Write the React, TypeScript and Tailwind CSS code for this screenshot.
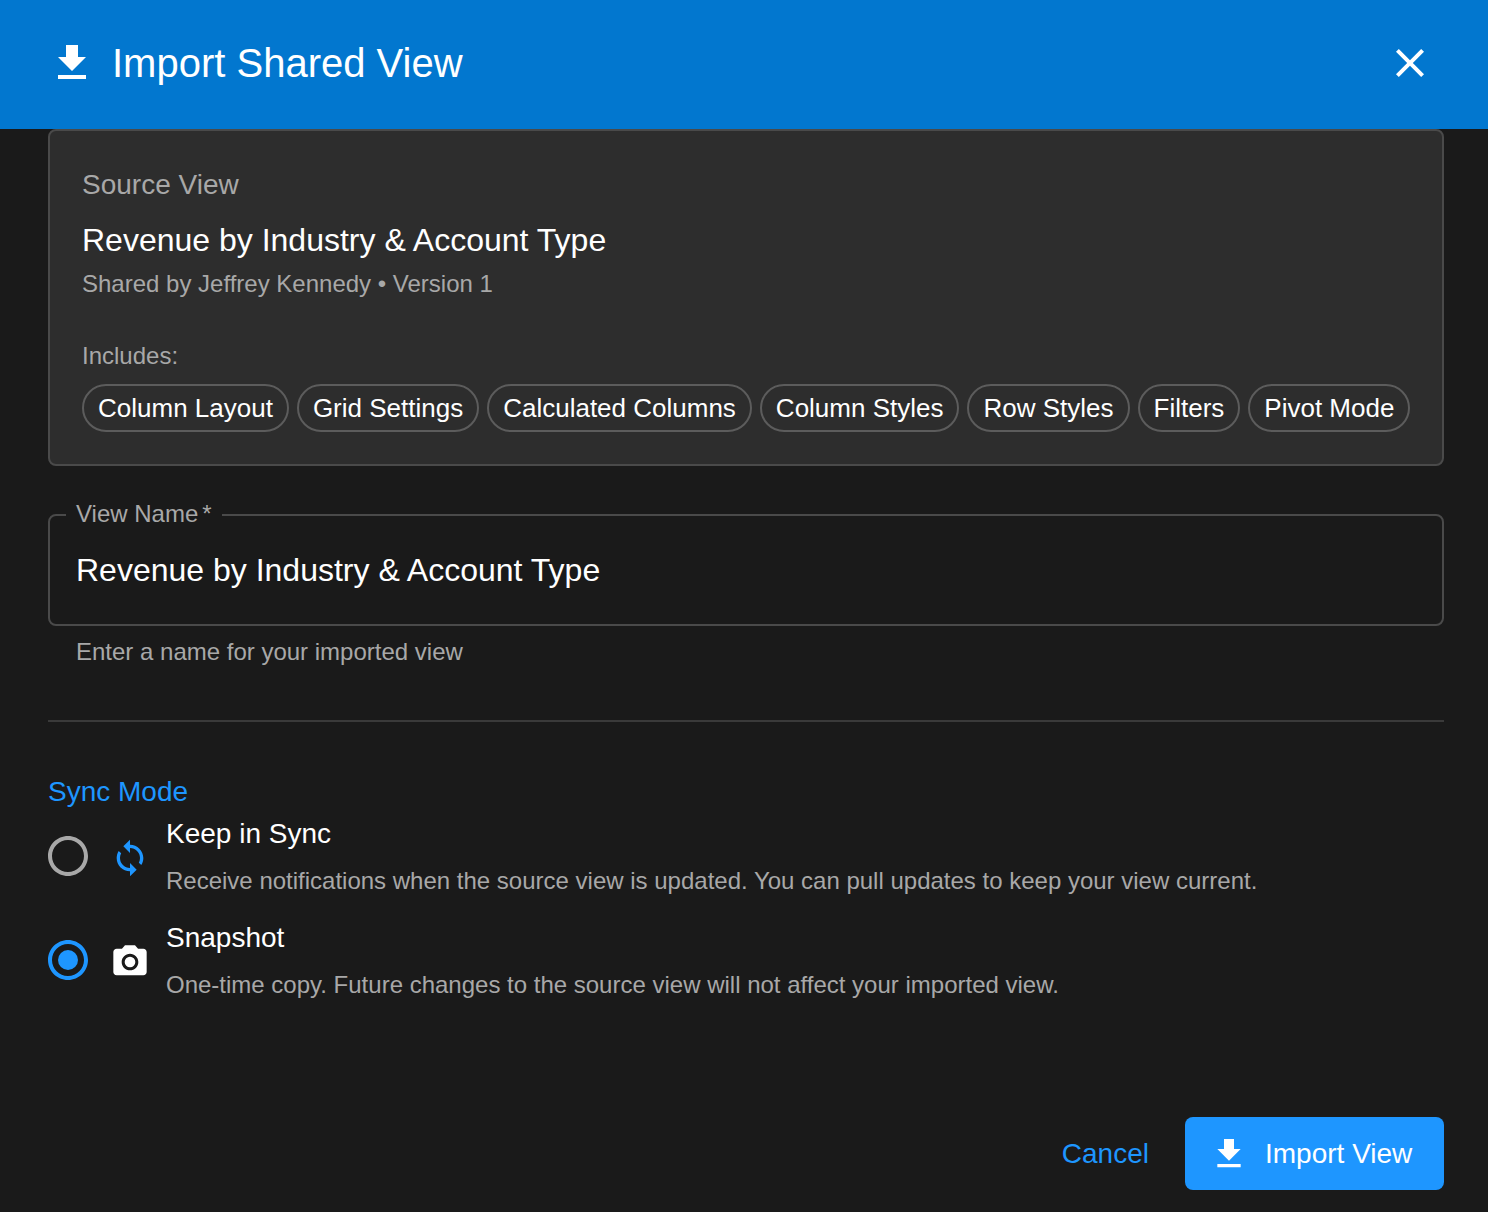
import React from 'react';

const DOWNLOAD = 'M5 20h14v-2H5v2zM19 9h-4V3H9v6H5l7 7 7-7z';
const CLOSE = 'M19 6.41 17.59 5 12 10.59 6.41 5 5 6.41 10.59 12 5 17.59 6.41 19 12 13.41 17.59 19 19 17.59 13.41 12z';
const SYNC = 'M12 4V1L8 5l4 4V6c3.31 0 6 2.69 6 6 0 1.01-.25 1.97-.7 2.8l1.46 1.46C19.54 15.03 20 13.57 20 12c0-4.42-3.58-8-8-8zm0 14c-3.31 0-6-2.69-6-6 0-1.01.25-1.97.7-2.8L5.24 7.74C4.46 8.97 4 10.43 4 12c0 4.42 3.58 8 8 8v3l4-4-4-4v3z';
const CAMERA = 'M9 2 7.17 4H4c-1.1 0-2 .9-2 2v12c0 1.1.9 2 2 2h16c1.1 0 2-.9 2-2V6c0-1.1-.9-2-2-2h-3.17L15 2H9zm3 15c-2.76 0-5-2.24-5-5s2.24-5 5-5 5 2.24 5 5-2.24 5-5 5zM12 8.8a3.2 3.2 0 1 0 0 6.4 3.2 3.2 0 0 0 0-6.4z';
const RADIO_RING = 'M12 2C6.48 2 2 6.48 2 12s4.48 10 10 10 10-4.48 10-10S17.52 2 12 2zm0 18c-4.42 0-8-3.58-8-8s3.58-8 8-8 8 3.58 8 8-3.58 8-8 8z';

const Icon: React.FC<{ d: string; className: string }> = ({ d, className }) => (
  <svg viewBox="0 0 24 24" fill="currentColor" className={className}>
    <path d={d} />
  </svg>
);

const features = ['Column Layout', 'Grid Settings', 'Calculated Columns', 'Column Styles', 'Row Styles', 'Filters', 'Pivot Mode'];

const SyncOption: React.FC<{ title: string; description: string; selected?: boolean; icon: React.ReactNode }> = ({ title, description, selected, icon }) => (
  <div className="flex h-[88px] items-center">
    <div className="relative -ml-1 h-12 w-12 shrink-0">
      <Icon d={RADIO_RING} className={`h-12 w-12 ${selected ? 'text-[#1e96ff]' : 'text-[#a8a8a8]'}`} />
      {selected && <div className="absolute left-[14px] top-[14px] h-5 w-5 rounded-full bg-[#1e96ff]" />}
    </div>
    <div className="ml-[18px] mt-1 h-10 w-10 shrink-0">{icon}</div>
    <div className="ml-4 self-start">
      <div className="text-[28px] leading-[44px] text-white">{title}</div>
      <div className="mt-[7px] text-[24px] leading-[36px] text-[#a8a8a8]">{description}</div>
    </div>
  </div>
);

export default function App() {
  return (
    <div className="flex min-h-screen flex-col bg-[#1a1a1a] font-['Liberation_Sans',Arial,sans-serif]">
      <header className="flex h-[129px] shrink-0 items-center bg-[#0277cf] pb-1 pl-12 pr-[54px] text-white">
        <Icon d={DOWNLOAD} className="h-12 w-12" />
        <h1 className="ml-4 text-[40px] font-normal leading-[48px]">Import Shared View</h1>
        <Icon d={CLOSE} className="ml-auto h-12 w-12" />
      </header>

      <main className="flex flex-1 flex-col pb-[22px] pl-12 pr-11">
        <section className="h-[337px] rounded-lg border-2 border-[#4a4a4a] bg-[#2d2d2d] px-8 pt-[34px]">
          <div className="text-[28px] leading-[40px] text-[#a8a8a8]">Source View</div>
          <div className="mt-[11px] text-[32px] leading-[48px] text-white">Revenue by Industry &amp; Account Type</div>
          <div className="mt-[2px] text-[24px] leading-[36px] text-[#a8a8a8]">Shared by Jeffrey Kennedy • Version 1</div>
          <div className="mt-9 text-[24px] leading-[36px] text-[#a8a8a8]">Includes:</div>
          <div className="mt-[10px] flex gap-2">
            {features.map(f => (
              <span key={f} className="flex h-12 items-center whitespace-nowrap rounded-full border-2 border-[#5c5c5c] px-[14px] text-[26px] text-white">
                {f}
              </span>
            ))}
          </div>
        </section>

        <div className="relative mt-12 flex h-[112px] items-center rounded-lg border-2 border-[#4a4a4a] px-[26px] text-[32px] text-white">
          <span className="absolute -top-[19px] left-4 bg-[#1a1a1a] px-[10px] text-[24px] leading-[34px] text-[#a8a8a8]">
            View Name<span className="ml-[4px]">*</span>
          </span>
          Revenue by Industry &amp; Account Type
        </div>
        <div className="ml-7 mt-2 text-[24px] leading-[36px] text-[#a8a8a8]">Enter a name for your imported view</div>

        <div className="mt-[50px] h-[2px] bg-[#3a3a3a]" />

        <div className="mt-[50px] text-[28px] leading-[40px] text-[#1e96ff]">Sync Mode</div>
        <div className="flex flex-col gap-4">
          <SyncOption
            title="Keep in Sync"
            description="Receive notifications when the source view is updated. You can pull updates to keep your view current."
            icon={<Icon d={SYNC} className="h-10 w-10 text-[#1e96ff]" />}
          />
          <SyncOption
            selected
            title="Snapshot"
            description="One-time copy. Future changes to the source view will not affect your imported view."
            icon={<Icon d={CAMERA} className="h-10 w-10 text-white" />}
          />
        </div>

        <footer className="mt-auto flex items-center justify-end">
          <button className="text-[28px] text-[#1e96ff]">Cancel</button>
          <button className="ml-9 flex h-[73px] w-[259px] items-center rounded-lg bg-[#1e96ff] pl-6 text-[28px] text-white">
            <Icon d={DOWNLOAD} className="h-10 w-10" />
            <span className="ml-4">Import View</span>
          </button>
        </footer>
      </main>
    </div>
  );
}
